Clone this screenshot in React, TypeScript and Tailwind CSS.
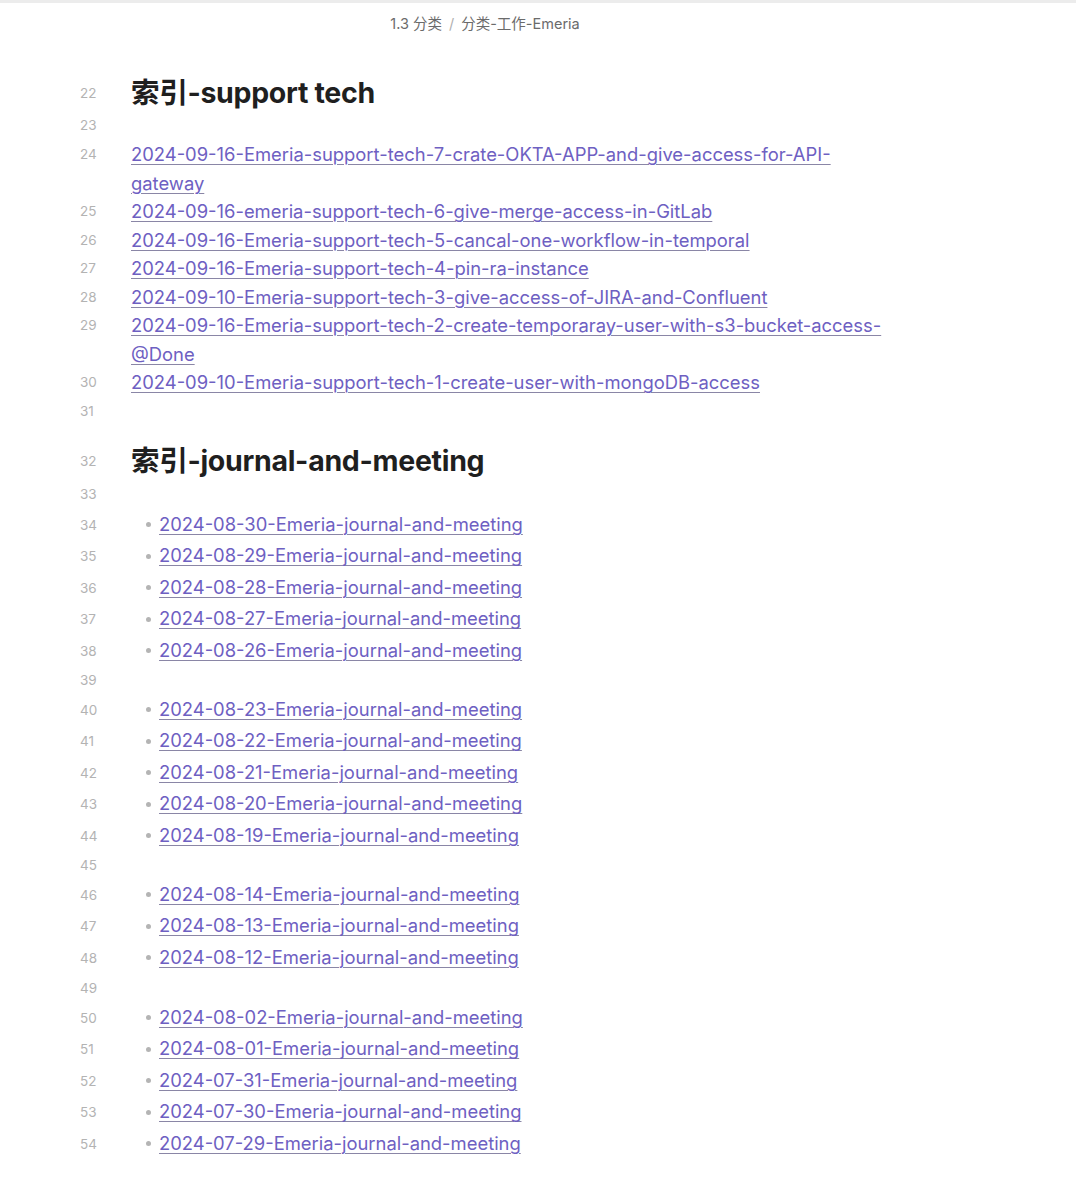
type Row =
  | { n: number; kind: 'h'; text: string; h: string }
  | { n: number; kind: 'empty'; h: string }
  | { n: number; kind: 'link'; lines: string[] }
  | { n: number; kind: 'bullet'; text: string };

const rows: Row[] = [
  { n: 22, kind: 'h', text: '索引-support tech', h: 'h-[44px]' },
  { n: 23, kind: 'empty', h: 'h-[29px]' },
  { n: 24, kind: 'link', lines: ['2024-09-16-Emeria-support-tech-7-crate-OKTA-APP-and-give-access-for-API-', 'gateway'] },
  { n: 25, kind: 'link', lines: ['2024-09-16-emeria-support-tech-6-give-merge-access-in-GitLab'] },
  { n: 26, kind: 'link', lines: ['2024-09-16-Emeria-support-tech-5-cancal-one-workflow-in-temporal'] },
  { n: 27, kind: 'link', lines: ['2024-09-16-Emeria-support-tech-4-pin-ra-instance'] },
  { n: 28, kind: 'link', lines: ['2024-09-10-Emeria-support-tech-3-give-access-of-JIRA-and-Confluent'] },
  { n: 29, kind: 'link', lines: ['2024-09-16-Emeria-support-tech-2-create-temporaray-user-with-s3-bucket-access-', '@Done'] },
  { n: 30, kind: 'link', lines: ['2024-09-10-Emeria-support-tech-1-create-user-with-mongoDB-access'] },
  { n: 31, kind: 'empty', h: 'h-[28.5px]' },
  { n: 32, kind: 'h', text: '索引-journal-and-meeting', h: 'h-[54px]' },
  { n: 33, kind: 'empty', h: 'h-[30px]' },
  { n: 34, kind: 'bullet', text: '2024-08-30-Emeria-journal-and-meeting' },
  { n: 35, kind: 'bullet', text: '2024-08-29-Emeria-journal-and-meeting' },
  { n: 36, kind: 'bullet', text: '2024-08-28-Emeria-journal-and-meeting' },
  { n: 37, kind: 'bullet', text: '2024-08-27-Emeria-journal-and-meeting' },
  { n: 38, kind: 'bullet', text: '2024-08-26-Emeria-journal-and-meeting' },
  { n: 39, kind: 'empty', h: 'h-[27.5px]' },
  { n: 40, kind: 'bullet', text: '2024-08-23-Emeria-journal-and-meeting' },
  { n: 41, kind: 'bullet', text: '2024-08-22-Emeria-journal-and-meeting' },
  { n: 42, kind: 'bullet', text: '2024-08-21-Emeria-journal-and-meeting' },
  { n: 43, kind: 'bullet', text: '2024-08-20-Emeria-journal-and-meeting' },
  { n: 44, kind: 'bullet', text: '2024-08-19-Emeria-journal-and-meeting' },
  { n: 45, kind: 'empty', h: 'h-[27.5px]' },
  { n: 46, kind: 'bullet', text: '2024-08-14-Emeria-journal-and-meeting' },
  { n: 47, kind: 'bullet', text: '2024-08-13-Emeria-journal-and-meeting' },
  { n: 48, kind: 'bullet', text: '2024-08-12-Emeria-journal-and-meeting' },
  { n: 49, kind: 'empty', h: 'h-[28.5px]' },
  { n: 50, kind: 'bullet', text: '2024-08-02-Emeria-journal-and-meeting' },
  { n: 51, kind: 'bullet', text: '2024-08-01-Emeria-journal-and-meeting' },
  { n: 52, kind: 'bullet', text: '2024-07-31-Emeria-journal-and-meeting' },
  { n: 53, kind: 'bullet', text: '2024-07-30-Emeria-journal-and-meeting' },
  { n: 54, kind: 'bullet', text: '2024-07-29-Emeria-journal-and-meeting' },
];

const linkCls =
  'text-[#6e60c2] underline decoration-[#8a86a6] decoration-1 underline-offset-[3px]';

function LineNo({ n }: { n: number }) {
  return <span className="w-[98px] shrink-0 pl-[80px] text-[13.5px] text-[#b3b3b3]">{n}</span>;
}

export default function App() {
  return (
    <div
      className="min-h-[1180px] w-[1076px] bg-white"
      style={{ fontFamily: 'Inter, "Noto Sans CJK SC", sans-serif' }}
    >
      {/* top strip */}
      <div className="h-[3px] bg-[#ececec]" />

      {/* breadcrumb */}
      <div className="flex h-[42px] items-center justify-center pr-[106px] text-[14.5px] text-[#6b6b6b]">
        <span className="mr-[7px]">1.3 分类</span>
        <span className="text-[#b0b0b0]">/</span>
        <span className="ml-[7px]">分类-工作-Emeria</span>
      </div>

      <div className="h-[22px]" />

      {/* editor */}
      <div className="flex flex-col">
        {rows.map((r) => {
          if (r.kind === 'h') {
            return (
              <div key={r.n} className={`flex items-end ${r.h}`}>
                <div className="flex h-[36px] items-center">
                  <LineNo n={r.n} />
                  <h2 className="ml-[33px] text-[28.5px] font-bold leading-[36px] tracking-[-0.3px] text-[#1f1f1f]">
                    {r.text}
                  </h2>
                </div>
              </div>
            );
          }
          if (r.kind === 'empty') {
            return (
              <div key={r.n} className={`flex items-center ${r.h}`}>
                <LineNo n={r.n} />
              </div>
            );
          }
          if (r.kind === 'link') {
            return (
              <div key={r.n} className="flex items-start">
                <div className="flex h-[28.5px] items-center">
                  <LineNo n={r.n} />
                </div>
                <div className="ml-[33px] flex flex-col text-[18.4px] leading-[28.5px]">
                  {r.lines.map((l) => (
                    <a key={l} className={linkCls}>
                      {l}
                    </a>
                  ))}
                </div>
              </div>
            );
          }
          return (
            <div key={r.n} className="flex h-[31.5px] items-center">
              <LineNo n={r.n} />
              <span className="ml-[48px] mr-[8px] h-[5px] w-[5px] rounded-full bg-[#b4b4b4]" />
              <a className={`${linkCls} text-[18.4px]`}>{r.text}</a>
            </div>
          );
        })}
      </div>
    </div>
  );
}
